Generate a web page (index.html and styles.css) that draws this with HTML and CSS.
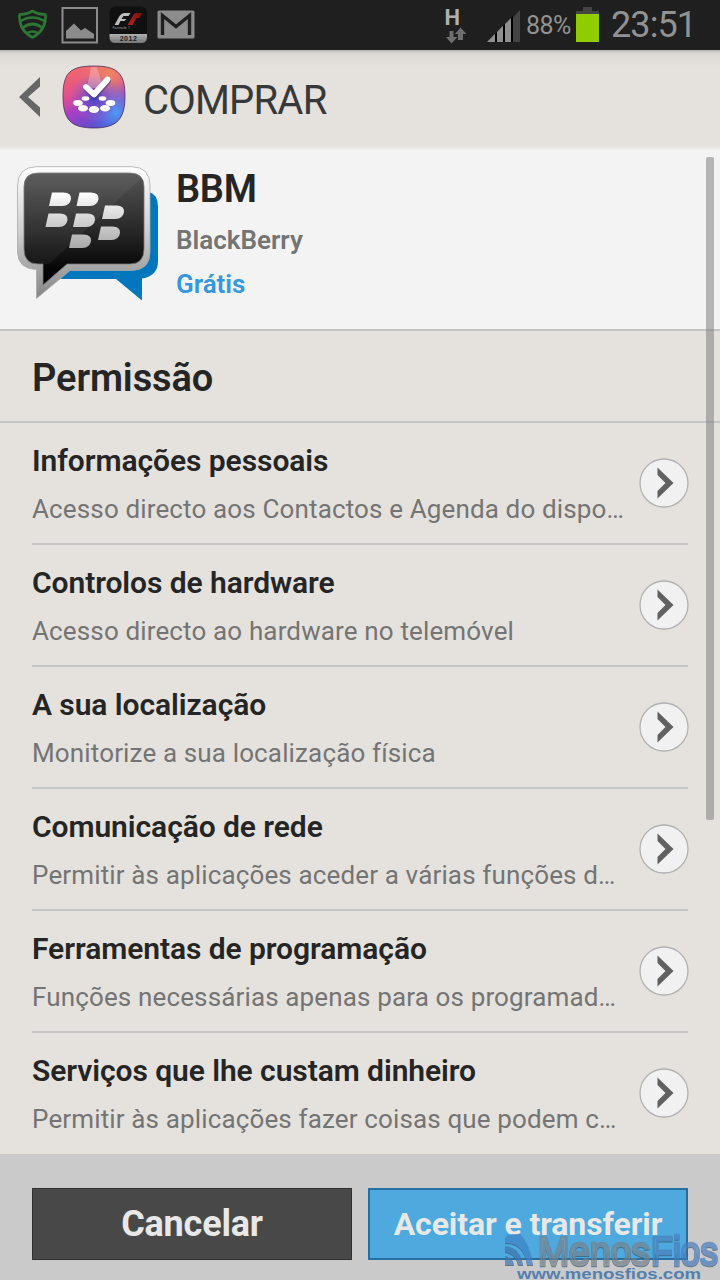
FILE: index.html
```
<!DOCTYPE html>
<html lang="pt-PT">
<head>
    <meta charset="UTF-8">
    <meta name="viewport" content="width=device-width, initial-scale=1.0">
    <title>Comprar - BBM</title>
    <link rel="stylesheet" href="styles.css">
</head>
<body>
<div class="screen">

    <!-- Barra de estado -->
    <div class="statusbar">
        <svg class="notifications" width="200" height="50" viewBox="0 0 200 50">
            <defs>
                <linearGradient id="f1Label" x1="0" y1="0" x2="0" y2="1">
                    <stop offset="0" stop-color="#b0b0b0"/>
                    <stop offset="1" stop-color="#777"/>
                </linearGradient>
                <linearGradient id="f1Red" x1="0" y1="0" x2="1" y2="0">
                    <stop offset="0" stop-color="#c42020"/>
                    <stop offset="1" stop-color="#6b1010"/>
                </linearGradient>
            </defs>
            <g fill="none" stroke="#2c7636" stroke-width="2.7" stroke-linejoin="round">
                <path d="M19.5 14.5Q27 14.5 32.5 11Q38 14.5 45.5 14.5Q46.5 30 32.5 37.5Q18.5 30 19.5 14.5Z"/>
                <path d="M20 21.5Q32.5 13.5 45 21.5M22.5 28Q32.5 20 42.5 28"/>
                <path d="M27.5 33Q32.5 30 37.5 33"/>
            </g>
            <path fill="none" stroke="#8c8c8c" stroke-width="2" d="M62.5 8h34.5v34.5H62.5z"/>
            <path fill="#8c8c8c" d="M66 38.500V31l8-7.500 7 7 4-2.500 9 6v4.500z"/>
            <rect x="109.500" y="6.500" width="37.500" height="36.500" rx="6" fill="#101010"/>
            <path fill="url(#f1Label)" d="M109.500 34H147v3q0 6-6 6h-25.500q-6 0-6-6z"/>
            <path fill="#bdbdbd" d="M114.500 25l5-9q2-3 5-3h6l-2 3h-5l-2 3h5l-2 2h-4l-2 4z"/>
            <path fill="url(#f1Red)" d="M127.500 25l6-10q1-2 3-2h6l-3 5h-3l-4 7z"/>
            <text x="112.500" y="28.500" class="f1-name">Formula 1</text>
            <text x="128.500" y="41" class="f1-year">2012</text>
            <rect x="157.500" y="10.500" width="37" height="28" rx="1.500" fill="#8c8c8c"/>
            <path fill="none" stroke="#1f1f1f" stroke-width="3.400" d="M162.500 35V15.500L176 26.500l13.500-11V35"/>
        </svg>
        <div class="status-right">
            <svg width="95" height="50" viewBox="0 0 95 50">
                <text x="14.500" y="25" class="network">H</text>
                <path fill="#6e6e6e" d="M19.500 31h4v6h4L21.500 43.500 16 37h3.500zM28 40v-6h-3l5.500-6.500L36.500 34H33v6z"/>
                <path fill="#444" d="M59 42L90 10v32z"/>
                <path fill="#8f8f8f" d="M57 42l8-8.200V42z M67 42v-10l6-6.300V42zM75 42V24l6-6V42z"/>
                <path fill="#000" d="M65 34l2-2v10h-2zM73 26l2-2v18h-2zM81 18l2-2v26h-2z"/>
            </svg>
            <span class="percent">88%</span>
            <svg class="battery" width="23" height="50" viewBox="0 0 23 50">
                <path fill="#444" d="M7 7h9v4h7v4H0v-4h7z"/>
                <path fill="#8fcd00" d="M0 14h23v28H0z"/>
            </svg>
            <span class="clock">23:51</span>
        </div>
    </div>

    <header class="header">
        <svg class="back" width="22" height="40" viewBox="0 0 22 40"><path fill="#666" d="M22 0v9.500L10 20l12 10.500V40L1 20z"/></svg>
        <svg class="store-icon" width="64" height="64" viewBox="0 0 64 64">
            <defs>
                <linearGradient id="storeBg" x1="0.3" y1="0" x2="0.7" y2="1">
                    <stop offset="0" stop-color="#f4656a"/>
                    <stop offset="0.35" stop-color="#e0508f"/>
                    <stop offset="0.6" stop-color="#a83fc6"/>
                    <stop offset="1" stop-color="#4a50cc"/>
                </linearGradient>
                <radialGradient id="storeOrange" cx="0.75" cy="0.12" r="0.6">
                    <stop offset="0" stop-color="#ee8560"/>
                    <stop offset="1" stop-color="#e87078" stop-opacity="0"/>
                </radialGradient>
                <radialGradient id="storeBlue" cx="0.85" cy="0.75" r="0.5">
                    <stop offset="0" stop-color="#4f9cf4"/>
                    <stop offset="1" stop-color="#5068e8" stop-opacity="0"/>
                </radialGradient>
                <radialGradient id="storeCenter">
                    <stop offset="0" stop-color="#3b3fc4"/>
                    <stop offset="1" stop-color="#9660c8" stop-opacity="0.1"/>
                </radialGradient>
            </defs>
            <path fill="url(#storeBg)" d="M32 1C55 1 63 8 63 31S55 63 32 63 1 55 1 31 9 1 32 1z"/>
            <path fill="url(#storeOrange)" d="M32 1C55 1 63 8 63 31S55 63 32 63 1 55 1 31 9 1 32 1z"/>
            <path fill="url(#storeBlue)" stroke="#4b2858" stroke-opacity=".75" d="M32 1C55 1 63 8 63 31S55 63 32 63 1 55 1 31 9 1 32 1z"/>
            <circle cx="32" cy="33" r="23" fill="url(#storeCenter)"/>
            <path fill="#fff" fill-opacity=".25" d="M29 2h6l6 21H25z"/>
            <path fill="none" stroke="#323575" stroke-opacity=".5" stroke-width="6" stroke-linecap="round" stroke-linejoin="round" d="M24.500 23.500l8 8L46 16"/>
            <path fill="none" stroke="#fff" stroke-width="5.800" stroke-linecap="round" stroke-linejoin="round" d="M24 22l8 7.500L45.500 14.500"/>
            <g fill="#fff">
                <ellipse cx="23.500" cy="33.500" rx="3.800" ry="2.200"/>
                <ellipse cx="40.500" cy="33.500" rx="3.800" ry="2.200"/>
                <ellipse cx="16" cy="38" rx="4.800" ry="2.900"/>
                <ellipse cx="48.500" cy="38" rx="4.800" ry="2.900"/>
                <ellipse cx="21" cy="43.200" rx="5" ry="3.200"/>
                <ellipse cx="43" cy="43.200" rx="5" ry="3.200"/>
                <ellipse cx="32" cy="44.500" rx="5.200" ry="3.500"/>
            </g>
        </svg>
        <h1>COMPRAR</h1>
    </header>

    <!-- Aplicação -->
    <section class="app">
        <svg class="app-icon" width="144" height="138" viewBox="0 0 144 138">
            <defs>
                <linearGradient id="bbmFrame" x1="0" y1="0" x2="0" y2="1">
                    <stop offset="0" stop-color="#fff"/>
                    <stop offset="0.5" stop-color="#cdcdcd"/>
                    <stop offset="1" stop-color="#858585"/>
                </linearGradient>
                <linearGradient id="bbmFace" x1="0" y1="0" x2="0" y2="1">
                    <stop offset="0" stop-color="#555"/>
                    <stop offset="0.55" stop-color="#242424"/>
                    <stop offset="0.85" stop-color="#070707"/>
                    <stop offset="1" stop-color="#000"/>
                </linearGradient>
                <linearGradient id="bbmDots" gradientUnits="userSpaceOnUse" x1="0" y1="26" x2="0" y2="82">
                    <stop offset="0" stop-color="#fff"/>
                    <stop offset="1" stop-color="#a9a9a9"/>
                </linearGradient>
            </defs>
            <path fill="#0277be" d="M132 25.500Q142 28 142 41v54q0 15-16 17.500V134.500L100 113H42V90h90z"/>
            <path fill="url(#bbmFrame)" stroke="#aaa" stroke-width=".8" d="M20.500.7h95Q134 1 134 19.500V86q0 18-18.500 18.500H54L20.500 132.500V103.500Q2 103 1.500 86V19.500Q2 1 20.500.7z"/>
            <path fill="url(#bbmFace)" stroke="#777" stroke-width=".8" d="M22 7h92q14 0 14 14v62q0 15-14 15H51L27 119V98h-5Q8 98 8 83V21Q8 7 22 7z"/>
            <path fill="#fff" fill-opacity=".05" d="M22 7h92q8 0 11.500 5L33 98H22Q8 98 8 83V21Q8 7 22 7z"/>
            <g fill="url(#bbmDots)">
                <path d="M36 26.500H47.500q8 .3 7.500 6.500Q54 39.500 46.500 40H33z"/>
                <path d="M63.500 26.500H75q8 .3 7.500 6.500Q81.500 39.500 74 40H60.500z"/>
                <path d="M32.500 47.500H44q8 .3 7.500 6.500Q50.500 60.500 43 61H29.500z"/>
                <path d="M60 47.500H71.500q8 .3 7.500 6.500Q78 60.500 70.500 61H57z"/>
                <path d="M89 39.500h11.500q8 .3 7.500 6.500Q107 52.500 99.500 53H86z"/>
                <path d="M85 60.500h11.500q8 .3 7.500 6.500Q103 73.500 95.500 74H82z"/>
                <path d="M56 68.500H67.500q8 .3 7.500 6.500Q74 81.500 66.500 82H53z"/>
            </g>
        </svg>
        <div class="app-info">
            <h2>BBM</h2>
            <p class="vendor">BlackBerry</p>
            <p class="price">Grátis</p>
        </div>
    </section>

    <h3 class="section-title">Permissão</h3>

    <ul class="permissions">
        <li>
            <div class="text">
                <h4>Informações pessoais</h4>
                <p>Acesso directo aos Contactos e Agenda do dispo…</p>
            </div>
            <svg class="more" width="50" height="50" viewBox="0 0 50 50"><circle cx="25" cy="25" r="24"/><path d="M18.500 9.500L34.500 25l-16 15.500v-7.500l8-8-8-8z"/></svg>
        </li>
        <li>
            <div class="text">
                <h4>Controlos de hardware</h4>
                <p>Acesso directo ao hardware no telemóvel</p>
            </div>
            <svg class="more" width="50" height="50" viewBox="0 0 50 50"><circle cx="25" cy="25" r="24"/><path d="M18.500 9.500L34.500 25l-16 15.500v-7.500l8-8-8-8z"/></svg>
        </li>
        <li>
            <div class="text">
                <h4>A sua localização</h4>
                <p>Monitorize a sua localização física</p>
            </div>
            <svg class="more" width="50" height="50" viewBox="0 0 50 50"><circle cx="25" cy="25" r="24"/><path d="M18.500 9.500L34.500 25l-16 15.500v-7.500l8-8-8-8z"/></svg>
        </li>
        <li>
            <div class="text">
                <h4>Comunicação de rede</h4>
                <p>Permitir às aplicações aceder a várias funções d…</p>
            </div>
            <svg class="more" width="50" height="50" viewBox="0 0 50 50"><circle cx="25" cy="25" r="24"/><path d="M18.500 9.500L34.500 25l-16 15.500v-7.500l8-8-8-8z"/></svg>
        </li>
        <li>
            <div class="text">
                <h4>Ferramentas de programação</h4>
                <p>Funções necessárias apenas para os programad…</p>
            </div>
            <svg class="more" width="50" height="50" viewBox="0 0 50 50"><circle cx="25" cy="25" r="24"/><path d="M18.500 9.500L34.500 25l-16 15.500v-7.500l8-8-8-8z"/></svg>
        </li>
        <li>
            <div class="text">
                <h4>Serviços que lhe custam dinheiro</h4>
                <p>Permitir às aplicações fazer coisas que podem c…</p>
            </div>
            <svg class="more" width="50" height="50" viewBox="0 0 50 50"><circle cx="25" cy="25" r="24"/><path d="M18.500 9.500L34.500 25l-16 15.500v-7.500l8-8-8-8z"/></svg>
        </li>
    </ul>

    <footer class="actions">
        <button type="button" class="cancel">Cancelar</button>
        <button type="button" class="accept">Aceitar e transferir</button>
    </footer>

    <div class="scrollbar"></div>

    <!-- Marca de água -->
    <svg class="watermark" width="220" height="52" viewBox="0 0 220 52">
        <defs>
            <linearGradient id="wmGray" x1="0" y1="0" x2="0" y2="1">
                <stop offset="0.5" stop-color="#87929b"/>
                <stop offset="0.6" stop-color="#66727c"/>
            </linearGradient>
            <linearGradient id="wmBlue" x1="0" y1="0" x2="0" y2="1">
                <stop offset="0.5" stop-color="#5b8ecb"/>
                <stop offset="0.6" stop-color="#3a6eac"/>
            </linearGradient>
        </defs>
        <g class="brand">
            <path fill="#3f80c8" d="M5 11Q6 6 13 6h7q10 10 13 31h-6Q24 15 5 15z"/>
            <path fill="#3f74ae" d="M5 18q15 1 18 19h-5Q16 26 5 24zM5 28q8 1 9 9H5z"/>
            <g class="brand-gray"><text x="38" y="37" textLength="112" lengthAdjust="spacingAndGlyphs">Menos</text></g>
            <g class="brand-blue"><text x="151" y="37" textLength="67" lengthAdjust="spacingAndGlyphs">Fios</text></g>
        </g>
        <text x="17" y="50.500" class="site" textLength="184" lengthAdjust="spacingAndGlyphs">www.menosfios.com</text>
    </svg>
</div>
</body>
</html>
```
FILE: styles.css
```
* {
    box-sizing: border-box;
}
body {
    margin: 0;
    font-family: Roboto, "Noto Sans", sans-serif;
    background-color: #e5e2dd;
}
h1, h2, h3, h4, p, ul {
    margin: 0;
    padding: 0;
}
svg {
    display: block;
    flex-shrink: 0;
}
.screen {
    position: relative;
    display: flex;
    flex-direction: column;
    width: 720px;
    height: 1280px;
    overflow: hidden;
}

/* Barra de estado */
.statusbar {
    display: flex;
    justify-content: space-between;
    height: 50px;
    background-color: #1f1f1f;
    color: #929292;
}
.status-right {
    display: flex;
    align-items: center;
    width: 290px;
}
.network {
    font-size: 22px;
    font-weight: bold;
    fill: #b0b0b0;
}
.f1-name {
    font-size: 4px;
    font-style: italic;
    fill: #999;
}
.f1-year {
    font-family: "Liberation Sans", Arial, sans-serif;
    font-size: 7px;
    font-weight: bold;
    letter-spacing: 0.5px;
    text-anchor: middle;
    fill: #222;
}
.percent {
    width: 51px;
    padding: 2px 0 0 1px;
    font-size: 25px;
    letter-spacing: -0.5px;
    line-height: 50px;
}
.clock {
    padding-left: 12px;
    font-size: 36px;
    letter-spacing: -0.9px;
    line-height: 50px;
}

/* Cabeçalho */
.header {
    display: flex;
    align-items: center;
    height: 101px;
    padding: 0 0 7px 18px;
    background: linear-gradient(#b3b2b0 0, #d9d7d3 3px, #e2dfda 10px, #e5e2dd 18px, #e5e2dd 96px, #f3f3f3 101px);
}
.store-icon {
    margin-left: 22px;
}
h1 {
    margin: 8px 0 0 17px;
    font-size: 40px;
    font-weight: normal;
    letter-spacing: -0.8px;
    line-height: 48px;
    color: #373839;
}

/* Aplicação */
.app {
    display: flex;
    height: 180px;
    padding: 15px 0 0 16px;
    background-color: #f3f3f3;
    border-bottom: 2px solid #c5c5c5;
}
.app-info {
    margin-left: 16px;
}
.app-info h2 {
    font-size: 38px;
    font-weight: 600;
    letter-spacing: -0.3px;
    line-height: 46px;
    color: #252525;
}
.app-info p {
    font-size: 26px;
    font-weight: 600;
    line-height: 44px;
}
.app-info .vendor {
    margin-top: 6px;
    color: #747474;
}
.app-info .price {
    color: #3398df;
}

/* Permissões */
.section-title {
    height: 92px;
    padding-left: 32px;
    font-size: 38px;
    font-weight: 600;
    letter-spacing: -0.1px;
    line-height: 94px;
    color: #252525;
    border-bottom: 2px solid #c5c6c5;
}
.permissions {
    height: 731px;
    padding: 0 32px;
    list-style: none;
    overflow: hidden;
}
.permissions li {
    display: flex;
    justify-content: space-between;
    height: 122px;
    border-bottom: 2px solid #c5c6c5;
}
.permissions li:last-child {
    border-bottom: none;
}
.text {
    padding-top: 14px;
    white-space: nowrap;
}
.text h4 {
    font-size: 30px;
    font-weight: 600;
    letter-spacing: -0.07px;
    line-height: 48px;
    color: #252525;
}
.text p {
    font-size: 26px;
    letter-spacing: 0.14px;
    line-height: 48px;
    color: #747474;
}
.more {
    margin: 34.5px -0.5px 0 -20px;
}
.more circle {
    fill: #f1f1f1;
    stroke: #b2b2b2;
    stroke-width: 1.3;
}
.more path {
    fill: #616161;
}

/* Botões */
.actions {
    display: flex;
    gap: 16px;
    height: 126px;
    padding: 34px 32px 20px;
    background-color: #cacaca;
}
.actions button {
    width: 320px;
    padding: 0;
    font-family: inherit;
    font-weight: bold;
    color: #e8e8e8;
}
.cancel {
    font-size: 36px;
    letter-spacing: -0.2px;
    background-color: #484848;
    border: 1px solid #303030;
}
.accept {
    font-size: 32px;
    letter-spacing: -0.1px;
    background-color: #4da9de;
    border: 2px solid #276fa3;
}

.scrollbar {
    position: absolute;
    top: 157px;
    right: 6px;
    width: 8px;
    height: 663px;
    border-radius: 2px;
    background-color: rgba(128, 128, 128, 0.55);
}

.watermark {
    position: absolute;
    right: 0;
    bottom: 0;
}
.brand {
    font-family: "Liberation Sans", Arial, sans-serif;
    font-size: 41px;
    opacity: 0.7;
    filter: drop-shadow(0.5px 1.5px 0 #39576c);
}
.brand-gray {
    fill: url(#wmGray);
    stroke: #75828c;
    stroke-width: 2.6;
}
.brand-blue {
    fill: url(#wmBlue);
    stroke: #4a7dbb;
    stroke-width: 2.6;
}
.site {
    font-family: "Liberation Sans", Arial, sans-serif;
    font-size: 14px;
    font-weight: bold;
    fill: #557fb0;
}
```
